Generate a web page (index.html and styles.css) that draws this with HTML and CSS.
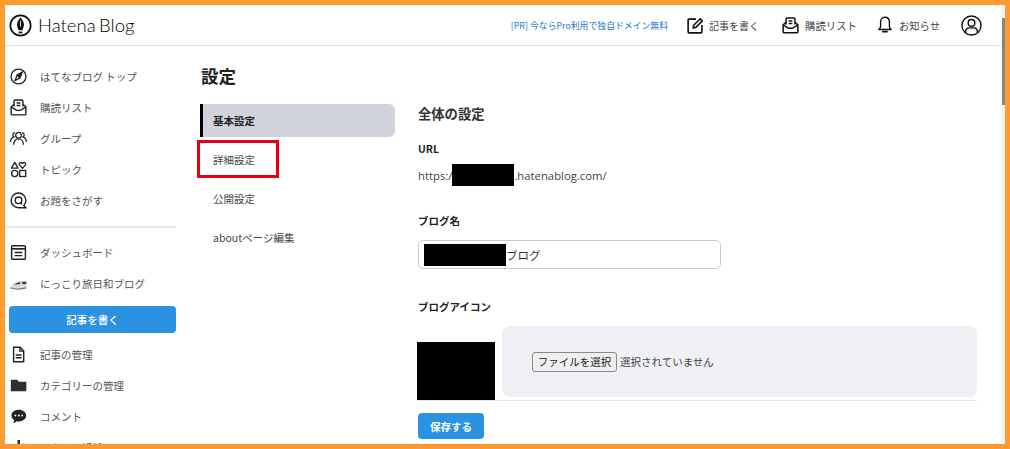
FILE: index.html
```html
<!DOCTYPE html>
<html lang="ja">
<head>
<meta charset="utf-8">
<title>設定 - Hatena Blog</title>
<link rel="stylesheet" href="styles.css">
</head>
<body>
<div class="frame">
  <div class="page">
    <header class="topbar">
      <a class="brand">
        <svg class="brand-mark" viewBox="0 0 24 24" fill="none" stroke="#111" stroke-width="1.800"><circle cx="12" cy="12" r="10.600"/><path d="M12 3.600c2.200 2.400 3.600 5 3.600 7.400 0 2.300-1 4.300-1.600 6h-4c-.6-1.700-1.600-3.700-1.600-6 0-2.400 1.400-5 3.600-7.400z" fill="#111" stroke="none"/><path d="M12 7v6" stroke="#fff" stroke-width=".9"/><path d="M10 18.400h4v1.800h-4z" fill="#111" stroke="none"/></svg>
        <span class="brand-name">Hatena Blog</span>
      </a>
      <a class="promo">[PR] 今ならPro利用で独自ドメイン無料</a>
      <a class="top-link top-write">
        <svg class="top-icon" viewBox="0 0 18 18" fill="none" stroke="#111" stroke-width="1.700"><path d="M9.500 2.200H2.200a1 1 0 0 0-1 1v12.600a1 1 0 0 0 1 1h12.600a1 1 0 0 0 1-1V8.500"/><path d="M6.500 11.700l.6-3 6.800-6.900 2.300 2.300-6.800 6.900z" stroke-linejoin="round"/></svg>
        <span>記事を書く</span>
      </a>
      <a class="top-link top-reader">
        <svg class="top-icon" viewBox="0 0 18 18" fill="none" stroke="#111" stroke-width="1.600"><path d="M4.300 8V2.100a1 1 0 0 1 1-1h7.400a1 1 0 0 1 1 1V8"/><path d="M7 4.300h4M7 6.800h4"/><path d="M4.300 5.600L1.200 8.300v7.500a1 1 0 0 0 1 1h13.600a1 1 0 0 0 1-1V8.300l-3.100-2.700"/><path d="M1.400 8.500L7 12h4l5.600-3.500"/></svg>
        <span>購読リスト</span>
      </a>
      <a class="top-link top-notice">
        <svg class="top-icon bell" viewBox="0 0 14 18" fill="none" stroke="#111" stroke-width="1.400"><path d="M7 1.200c-2.800 0-4.400 2.200-4.400 4.800v4.200c0 1.500-.8 2.400-1.800 3.300h12.400c-1-.9-1.800-1.800-1.800-3.300V6c0-2.600-1.600-4.800-4.400-4.800z" stroke-linejoin="round"/><path d="M5 15.600h4" stroke-linecap="round" stroke-width="1.800"/></svg>
        <span>お知らせ</span>
      </a>
      <svg class="avatar" viewBox="0 0 22 22" fill="none" stroke="#111" stroke-width="1.500"><circle cx="11" cy="11" r="10"/><circle cx="11" cy="8.300" r="3.500"/><path d="M4.600 18.200c.2-3 1.800-4.700 4.100-4.700h4.600c2.300 0 3.900 1.700 4.100 4.700"/></svg>
    </header>
    <div class="layout">
      <nav class="sidebar">
        <a class="side-row"><svg class="side-icon" viewBox="0 0 18 18" fill="none" stroke="#222" stroke-width="1.400"><circle cx="9" cy="9" r="7.900"/><path d="M12.800 4.600L10.400 10.400 5.200 13.400 7.600 7.600z" stroke-linejoin="round"/><path d="M12.800 4.600L10.400 10.400 7.600 7.600z" fill="#222"/></svg><span>はてなブログ トップ</span></a>
        <a class="side-row"><svg class="side-icon" viewBox="0 0 18 18" fill="none" stroke="#222" stroke-width="1.500"><path d="M4.300 8V2.100a1 1 0 0 1 1-1h7.400a1 1 0 0 1 1 1V8"/><path d="M7 4.300h4M7 6.800h4"/><path d="M4.300 5.600L1.200 8.300v7.500a1 1 0 0 0 1 1h13.600a1 1 0 0 0 1-1V8.300l-3.100-2.700"/><path d="M1.400 8.500L7 12h4l5.600-3.500"/></svg><span>購読リスト</span></a>
        <a class="side-row"><svg class="side-icon" viewBox="0 0 18 18" fill="none" stroke="#222" stroke-width="1.300"><circle cx="9" cy="5.600" r="3"/><path d="M3.800 15.500c0-3.700 2.200-6 5.200-6s5.200 2.300 5.200 6"/><path d="M5.200 2.700a2.500 2.500 0 0 0-1 4.600C2 8 .7 10 .6 12.800"/><path d="M12.800 2.700a2.500 2.500 0 0 1 1 4.600c2.200.7 3.500 2.700 3.600 5.500"/></svg><span>グループ</span></a>
        <a class="side-row"><svg class="side-icon" viewBox="0 0 18 18" fill="none" stroke="#222" stroke-width="1.400"><path d="M5 1.500L8.500 7.500H1.500z" stroke-linejoin="round"/><path d="M13.200 7.600l-3-3.200c-1.400-1.700.9-3.900 3-1.900 2.100-2 4.400.2 3 1.900z" stroke-linejoin="round"/><circle cx="5" cy="13.200" r="3.300"/><rect x="10.300" y="10" width="6.300" height="6.400"/></svg><span>トピック</span></a>
        <a class="side-row"><svg class="side-icon" viewBox="0 0 18 18" fill="none" stroke="#222" stroke-width="1.500"><path d="M16.800 16.700H9a7.800 7.800 0 1 1 7.800-7.800c0 2.300-.9 3.900-2.200 5.300z"/><circle cx="9" cy="8.800" r="3.500"/><path d="M10.800 11l2 2"/></svg><span>お題をさがす</span></a>
        <div class="side-divider"></div>
        <a class="side-row"><svg class="side-icon" viewBox="0 0 18 18" fill="none" stroke="#222" stroke-width="1.500"><rect x="1.700" y="1.800" width="14.600" height="14.400" rx="1.200"/><path d="M1.700 5.100h14.600" stroke-width="1.800"/><path d="M5 9h8M5 12.300h8"/></svg><span>ダッシュボード</span></a>
        <a class="side-row"><svg class="side-icon" viewBox="0 0 18 18"><path d="M.5 13C2 9.500 6 6.800 12 6h5.300v6.800c-5 1.900-11 1.900-16.800.2z" fill="#d8dadc"/><path d="M4.500 10.300c1.800-1.500 4-2.500 6.500-2.900l-.4 2z" fill="#34383c"/><path d="M13 7.200h4.300v2.400H13z" fill="#3a3e44"/><path d="M.5 13c5.500 1.700 11.300 1.700 16.800-.2v1.600c-5.500 1.500-11.300 1.500-16.800 0z" fill="#6e7276"/></svg><span>にっこり旅日和ブログ</span></a>
        <a class="write-button">記事を書く</a>
        <a class="side-row"><svg class="side-icon" viewBox="0 0 18 18" fill="none" stroke="#222" stroke-width="1.500"><path d="M3.800 1.400h7l3.700 3.800v11.400H3.800z" stroke-linejoin="round"/><path d="M10.500 1.400v4h4"/><path d="M6 9.500h6.300M6 12.500h6.300"/></svg><span>記事の管理</span></a>
        <a class="side-row"><svg class="side-icon" viewBox="0 0 18 18"><path d="M1.500 3h6l1.800 2h7.400a.6.600 0 0 1 .6.600v9a.6.600 0 0 1-.6.600H1.500a.6.600 0 0 1-.6-.6V3.600a.6.600 0 0 1 .6-.6z" fill="#2b2f36"/></svg><span>カテゴリーの管理</span></a>
        <a class="side-row"><svg class="side-icon" viewBox="0 0 18 18"><path d="M9.300 1.800c4.400 0 7.800 2.800 7.800 6.200s-3.400 6.200-7.800 6.200c-.8 0-1.500-.1-2.200-.3-1 1-2.400 1.800-4 2 .8-.9 1.300-1.900 1.400-3C2.800 11.800 1.500 10 1.500 8c0-3.400 3.400-6.200 7.800-6.200z" fill="#222"/><circle cx="5.700" cy="8" r="1" fill="#fff"/><circle cx="9.300" cy="8" r="1" fill="#fff"/><circle cx="12.900" cy="8" r="1" fill="#fff"/></svg><span>コメント</span></a>
        <a class="side-row"><svg class="side-icon" viewBox="0 0 18 18"><path d="M8 1h2.500v16H8z" fill="#222"/><path d="M3 8h2.500v9H3zM13 5h2.500v12H13z" fill="#222"/></svg><span>アクセス解析</span></a>
      </nav>
      <section class="settings-col">
        <h1 class="page-title">設定</h1>
        <ul class="tabs">
          <li class="tab tab-active">基本設定</li>
          <li class="tab tab-marked">詳細設定<span class="marker"></span></li>
          <li class="tab">公開設定</li>
          <li class="tab">aboutページ編集</li>
        </ul>
      </section>
      <main class="panel">
        <h2 class="panel-title">全体の設定</h2>
        <div class="label label-url">URL</div>
        <div class="url-row">https:/<span class="redact redact-url"></span>.hatenablog.com/</div>
        <div class="label label-name">ブログ名</div>
        <div class="name-input"><span class="redact redact-name"></span>ブログ</div>
        <div class="label label-icon">ブログアイコン</div>
        <div class="icon-row">
          <div class="redact redact-icon"></div>
          <div class="file-box">
            <button class="file-button" type="button">ファイルを選択</button>
            <span class="file-status">選択されていません</span>
          </div>
        </div>
        <button class="save-button" type="button">保存する</button>
      </main>
    </div>
  </div>
  <div class="scrollbar"><div class="scroll-thumb"></div></div>
</div>
</body>
</html>
```
FILE: styles.css
```css
* { box-sizing: border-box; }
html, body { margin: 0; padding: 0; background: #fff; }
body {
  font-family: "Noto Sans CJK JP", "Open Sans", sans-serif;
  color: #444;
  font-size: 10.5px;
}
a { color: inherit; text-decoration: none; }
.frame {
  width: 1010px;
  height: 449px;
  border: 5px solid #ff9a33;
  overflow: hidden;
  display: flex;
  background: #fff;
}
.page { flex: 1; min-width: 0; display: flex; flex-direction: column; }
.scrollbar { width: 4px; padding: 13px 0 0 1px; background: #f3f3f3; }
.scroll-thumb { height: 87px; background: #82868c; }

.topbar {
  height: 41px;
  flex: none;
  border-bottom: 1px solid #dcdcdc;
  display: flex;
  align-items: center;
  padding: 0 19px 0 4px;
}
.brand { display: flex; align-items: center; gap: 6px; margin-right: auto; }
.brand-mark { width: 23px; height: 23px; }
.brand-name {
  font-family: "Lato", sans-serif;
  font-weight: 300;
  font-size: 18.500px;
  color: #000;
  word-spacing: -1.500px;
}
.promo { font-size: 8.850px; color: #2a7cc9; margin-right: 19px; }
.top-link { display: flex; align-items: center; gap: 5px; font-size: 10px; color: #444; }
.top-write { margin-right: 23px; }
.top-reader { margin-right: 21px; font-size: 10.400px; gap: 6px; }
.top-notice { margin-right: 21px; gap: 7px; font-size: 10.300px; }
.top-icon { width: 17px; height: 17px; }
.top-icon.bell { width: 14px; height: 18px; }
.avatar { width: 21px; height: 21px; }

.layout { flex: 1; display: flex; min-height: 0; }
.sidebar { width: 171px; flex: none; padding-top: 14.500px; }
.side-row { height: 31px; display: flex; align-items: center; padding-left: 5px; gap: 13px; color: #555; }
.side-icon { width: 17px; height: 17px; flex: none; }
.side-divider { height: 2px; background: #e6eaee; margin: 10.500px 0 9px; }
.write-button {
  display: flex;
  align-items: center;
  justify-content: center;
  height: 27px;
  margin: 6.500px 0 6px 4px;
  background: #2b92e2;
  border-radius: 4px;
  color: #fff;
  font-weight: 500;
}

.settings-col { width: 195px; flex: none; margin-left: 24px; padding-top: 16px; }
.page-title { margin: 0 0 14px 1px; font-size: 17.500px; line-height: 28px; font-weight: 700; color: #222; }
.tabs { list-style: none; margin: 0; padding: 0; display: flex; flex-direction: column; gap: 6px; }
.tab { height: 33px; display: flex; align-items: center; padding-left: 13px; color: #444; position: relative; }
.tab-active {
  background: #d0d3da;
  border-left: 3px solid #000;
  border-radius: 0 6px 6px 0;
  padding-left: 10px;
  font-weight: 700;
  color: #222;
}
.marker {
  position: absolute;
  left: -3px;
  top: -3px;
  width: 82px;
  height: 38px;
  border: 3px solid #e60012;
}

.panel { width: 559px; flex: none; margin-left: 23px; padding-top: 58px; }
.panel-title { margin: 0 0 17px; font-size: 13.300px; line-height: 20px; font-weight: 700; color: #333; }
.label { font-size: 10.500px; line-height: 16px; font-weight: 700; color: #222; }
.url-row { display: flex; align-items: center; height: 22px; margin-top: 7px; font-family: "Open Sans", sans-serif; font-size: 11.300px; color: #444; }
.redact { background: #000; display: block; flex: none; }
.redact-url { width: 62px; height: 22px; }
.label-name { margin-top: 27px; }
.name-input {
  display: flex;
  align-items: center;
  width: 303px;
  height: 29px;
  margin-top: 11px;
  padding-left: 5px;
  border: 1px solid #c5c9d0;
  border-radius: 5px;
  font-size: 11.500px;
  color: #333;
}
.redact-name { width: 82px; height: 22px; }
.label-icon { margin-top: 30px; }
.icon-row {
  display: flex;
  height: 75px;
  margin-top: 11px;
  border-bottom: 1px solid #e3e6ea;
  gap: 7px;
}
.redact-icon { width: 78px; height: 58px; margin: 16px 0 0 -1px; }
.file-box {
  flex: 1;
  height: 71px;
  background: #eef0f4;
  border-radius: 8px;
  display: flex;
  align-items: center;
  padding-left: 30px;
  gap: 3px;
}
.file-button {
  width: 85px;
  height: 20px;
  padding: 0;
  border: 1px solid #8a8a8a;
  border-radius: 3px;
  background: #efefef;
  font-family: inherit;
  font-size: 10.500px;
  color: #222;
}
.file-status { font-size: 10.500px; color: #444; }
.save-button {
  display: block;
  width: 66px;
  height: 26px;
  margin-top: 12px;
  padding: 0;
  border: 0;
  border-radius: 4px;
  background: #2b92e2;
  color: #fff;
  font-family: inherit;
  font-size: 10.500px;
  font-weight: 700;
}
```
